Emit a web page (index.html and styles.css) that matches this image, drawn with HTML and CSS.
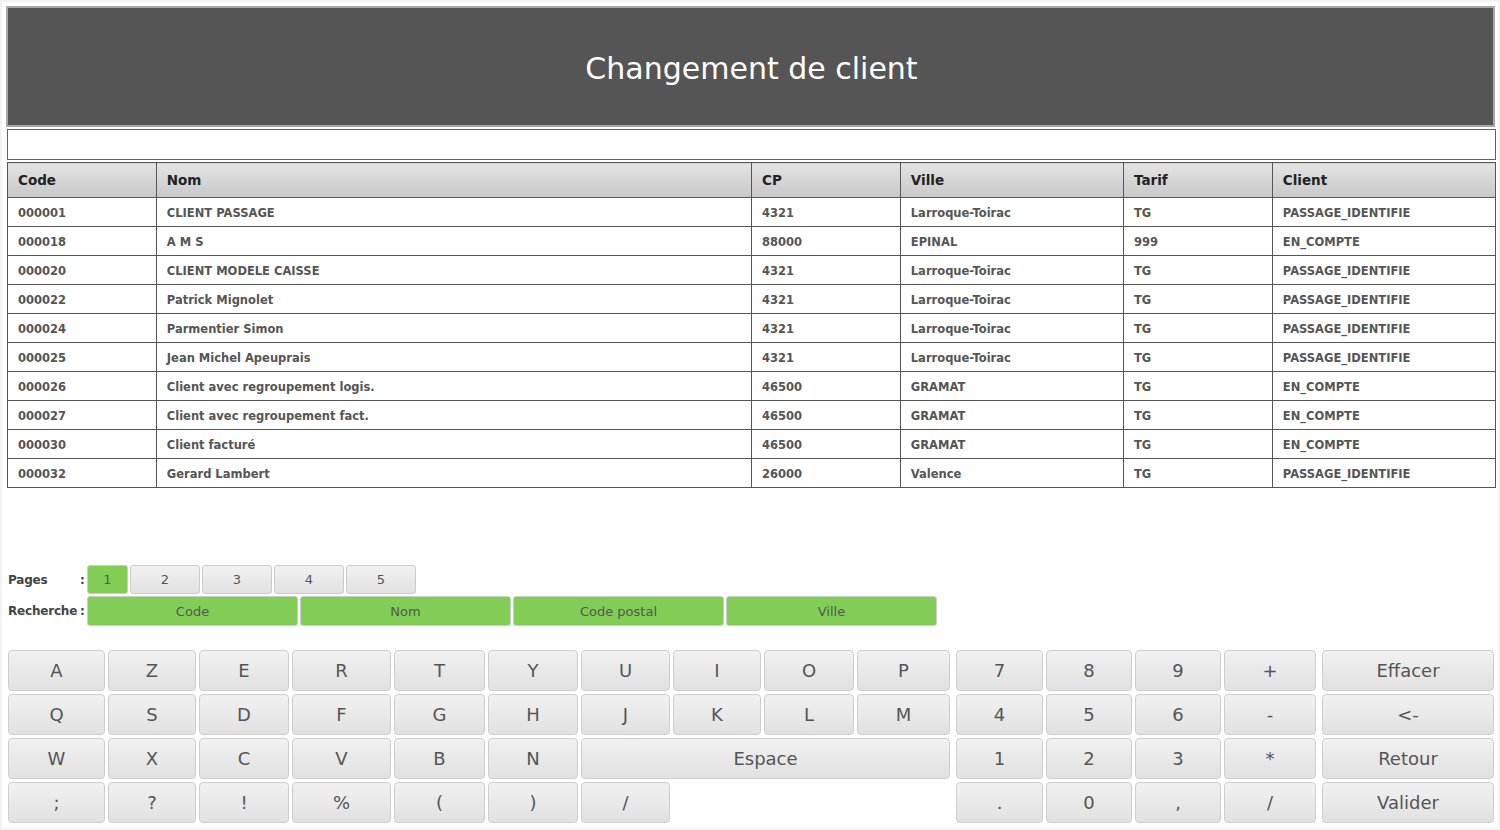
FILE: index.html
```html
<!DOCTYPE html>
<html lang="fr">
<head>
    <meta charset="UTF-8">
    <title>Changement de client</title>
    <link rel="stylesheet" href="styles.css">
</head>
<body>
<div class="page">

    <header class="title-bar">
        <h1>Changement de client</h1>
    </header>

    <input type="text" class="search" id="search">

    <table class="clients">
        <colgroup>
            <col class="w10"><col class="w40"><col class="w10"><col class="w15"><col class="w10"><col class="w15">
        </colgroup>
        <thead>
            <tr>
                <th>Code</th>
                <th>Nom</th>
                <th>CP</th>
                <th>Ville</th>
                <th>Tarif</th>
                <th>Client</th>
            </tr>
        </thead>
        <tbody>
            <tr><td>000001</td><td>CLIENT PASSAGE</td><td>4321</td><td>Larroque-Toirac</td><td>TG</td><td>PASSAGE_IDENTIFIE</td></tr>
            <tr><td>000018</td><td>A M S</td><td>88000</td><td>EPINAL</td><td>999</td><td>EN_COMPTE</td></tr>
            <tr><td>000020</td><td>CLIENT MODELE CAISSE</td><td>4321</td><td>Larroque-Toirac</td><td>TG</td><td>PASSAGE_IDENTIFIE</td></tr>
            <tr><td>000022</td><td>Patrick Mignolet</td><td>4321</td><td>Larroque-Toirac</td><td>TG</td><td>PASSAGE_IDENTIFIE</td></tr>
            <tr><td>000024</td><td>Parmentier Simon</td><td>4321</td><td>Larroque-Toirac</td><td>TG</td><td>PASSAGE_IDENTIFIE</td></tr>
            <tr><td>000025</td><td>Jean Michel Apeuprais</td><td>4321</td><td>Larroque-Toirac</td><td>TG</td><td>PASSAGE_IDENTIFIE</td></tr>
            <tr><td>000026</td><td>Client avec regroupement logis.</td><td>46500</td><td>GRAMAT</td><td>TG</td><td>EN_COMPTE</td></tr>
            <tr><td>000027</td><td>Client avec regroupement fact.</td><td>46500</td><td>GRAMAT</td><td>TG</td><td>EN_COMPTE</td></tr>
            <tr><td>000030</td><td>Client facturé</td><td>46500</td><td>GRAMAT</td><td>TG</td><td>EN_COMPTE</td></tr>
            <tr><td>000032</td><td>Gerard Lambert</td><td>26000</td><td>Valence</td><td>TG</td><td>PASSAGE_IDENTIFIE</td></tr>
        </tbody>
    </table>

    <div class="filters">
        <div class="filter-row">
            <span class="label">Pages</span><span class="colon">:</span>
            <button class="btn green p-first">1</button>
            <button class="btn p-num">2</button>
            <button class="btn p-num">3</button>
            <button class="btn p-num">4</button>
            <button class="btn p-num">5</button>
        </div>
        <div class="filter-row">
            <span class="label">Recherche</span><span class="colon">:</span>
            <button class="btn green s-key">Code</button>
            <button class="btn green s-key">Nom</button>
            <button class="btn green s-key">Code postal</button>
            <button class="btn green s-key">Ville</button>
        </div>
    </div>

    <div class="keyboard">
        <div class="letters">
            <button class="key">A</button><button class="key">Z</button><button class="key">E</button><button class="key">R</button><button class="key">T</button>
            <button class="key">Y</button><button class="key">U</button><button class="key">I</button><button class="key">O</button><button class="key">P</button>

            <button class="key">Q</button><button class="key">S</button><button class="key">D</button><button class="key">F</button><button class="key">G</button>
            <button class="key">H</button><button class="key">J</button><button class="key">K</button><button class="key">L</button><button class="key">M</button>

            <button class="key">W</button><button class="key">X</button><button class="key">C</button><button class="key">V</button><button class="key">B</button>
            <button class="key">N</button><button class="key space">Espace</button>

            <button class="key">;</button><button class="key">?</button><button class="key">!</button><button class="key">%</button><button class="key">(</button>
            <button class="key">)</button><button class="key">/</button>
        </div>
        <div class="numpad">
            <button class="key">7</button><button class="key">8</button><button class="key">9</button><button class="key">+</button>
            <button class="key">4</button><button class="key">5</button><button class="key">6</button><button class="key">-</button>
            <button class="key">1</button><button class="key">2</button><button class="key">3</button><button class="key">*</button>
            <button class="key">.</button><button class="key">0</button><button class="key">,</button><button class="key">/</button>
        </div>
        <div class="actions">
            <button class="key">Effacer</button>
            <button class="key">&lt;-</button>
            <button class="key">Retour</button>
            <button class="key">Valider</button>
        </div>
    </div>

</div>
</body>
</html>
```

FILE: styles.css
```css
html, body {
    margin: 0;
    padding: 0;
    background-color: #f3f3f3;
}

body {
    font-family: "DejaVu Sans", Verdana, sans-serif;
    color: #555555;
}

.page {
    background-color: #ffffff;
    margin: 2px;
    padding: 4px 3px 0 4px;
    height: 826px;
    box-sizing: border-box;
}

/* Title bar */
.title-bar {
    height: 121px;
    background-color: #555555;
    border: 2px solid #a8a8a8;
    box-sizing: border-box;
    display: flex;
    align-items: center;
    justify-content: center;
}

.title-bar h1 {
    margin: 0;
    color: #ffffff;
    font-weight: normal;
    font-size: 30px;
    padding: 4px 0 0 2px;
}

.search {
    display: block;
    width: 1489px;
    height: 31px;
    margin: 2px 0 2px 1px;
    border: 1px solid #0a78d4;
    box-sizing: border-box;
    outline: none;
}

/* Client table */
.clients {
    width: 1489px;
    margin-left: 1px;
    border-collapse: collapse;
    table-layout: fixed;
}

.w10 { width: 10%; }
.w15 { width: 15%; }
.w40 { width: 40%; }

.clients th, .clients td {
    border: 1px solid #555555;
    text-align: left;
    padding: 0 10px;
    white-space: nowrap;
    overflow: hidden;
}

.clients th {
    height: 34px;
    font-size: 13.5px;
    color: #222222;
    background: linear-gradient(#e4e4e4, #c8c8c8);
}

.clients td {
    height: 27px;
    padding-top: 1px;
    font-size: 11.5px;
    font-weight: bold;
    color: #555555;
}

/* Pages / search filters */
.filters {
    margin-top: 77px;
    display: flex;
    flex-direction: column;
    gap: 2px;
}

.filter-row {
    display: flex;
    align-items: center;
    gap: 2px;
    margin-left: 2px;
}

.label {
    width: 70px;
    font-size: 12px;
    font-weight: bold;
    letter-spacing: -0.2px;
    color: #444444;
}

.colon {
    width: 5px;
    font-size: 12px;
    font-weight: bold;
    color: #444444;
}

.btn {
    font-family: inherit;
    font-size: 13px;
    color: #555555;
    border: 1px solid #cccccc;
    border-radius: 3px;
    background: linear-gradient(#f1f1f1, #e2e2e2);
    padding: 0;
    height: 30px;
}

.btn.green {
    background: #82cd55;
}

.p-first { width: 41px; height: 29px; }
.p-num { width: 70px; height: 29px; }
.s-key { width: 211px; }

/* Virtual keyboard */
.keyboard {
    margin-top: 24px;
    display: flex;
    gap: 6px;
    margin-left: 2px;
}

.key {
    font-family: inherit;
    font-size: 18px;
    color: #555555;
    border: 1px solid #cdcdcd;
    border-radius: 4px;
    background: linear-gradient(#f1f1f1, #e1e1e1);
    padding: 0;
    height: 41px;
}

.letters {
    display: grid;
    grid-template-columns: 97px 88px 90px 99px 91px 90px 89px 88px 90px 93px;
    grid-auto-rows: 41px;
    gap: 3px;
}

.letters .space {
    grid-column: span 4;
}

.numpad {
    display: grid;
    grid-template-columns: 87px 86px 86px 92px;
    grid-auto-rows: 41px;
    gap: 3px;
}

.actions {
    display: grid;
    grid-template-columns: 172px;
    grid-auto-rows: 41px;
    gap: 3px;
}
```
